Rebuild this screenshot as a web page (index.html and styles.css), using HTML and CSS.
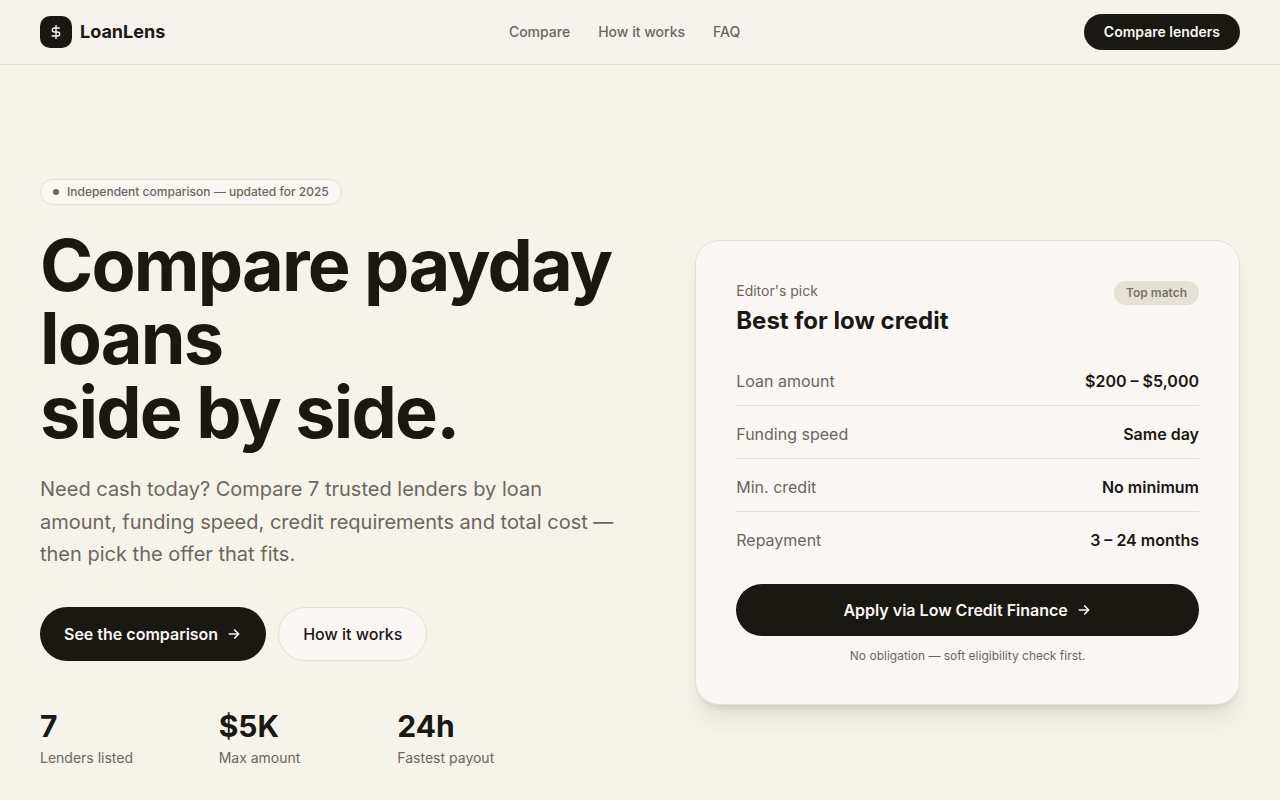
FILE: index.html
```html
<!DOCTYPE html>
<html lang="en">
<head>
<meta charset="utf-8">
<meta name="viewport" content="width=device-width, initial-scale=1">
<title>LoanLens</title>
<link rel="stylesheet" href="styles.css">
</head>
<body>
<header class="site-header">
  <div class="container header-row">
    <a class="brand" href="#">
      <span class="brand-mark">
        <svg class="icon" viewBox="0 0 24 24" aria-hidden="true"><path d="M12 2v20M17 6H9.500a3 3 0 0 0 0 6h5a3 3 0 0 1 0 6H6"/></svg>
      </span>
      LoanLens
    </a>
    <nav class="nav">
      <a href="#compare">Compare</a>
      <a href="#how">How it works</a>
      <a href="#faq">FAQ</a>
    </nav>
    <a class="btn btn-small" href="#compare">Compare lenders</a>
  </div>
</header>
<main class="container hero">
  <section class="intro">
    <p class="badge"><span class="dot"></span>Independent comparison — updated for 2025</p>
    <h1>Compare payday loans<br>side by side.</h1>
    <p class="lead">Need cash today? Compare 7 trusted lenders by loan amount, funding speed, credit requirements and total cost — then pick the offer that fits.</p>
    <div class="actions">
      <a class="btn btn-large" href="#compare">See the comparison
        <svg class="icon arrow" viewBox="0 0 24 24" aria-hidden="true"><path d="M5 12h14M13 6l6 6-6 6"/></svg>
      </a>
      <a class="btn btn-large btn-outline" href="#how">How it works</a>
    </div>
    <dl class="stats">
      <div><dt>Lenders listed</dt><dd>7</dd></div>
      <div><dt>Max amount</dt><dd>$5K</dd></div>
      <div><dt>Fastest payout</dt><dd>24h</dd></div>
    </dl>
  </section>
  <aside class="card">
    <div class="card-head">
      <div>
        <p class="eyebrow">Editor's pick</p>
        <h2>Best for low credit</h2>
      </div>
      <span class="tag">Top match</span>
    </div>
    <dl class="facts">
      <div><dt>Loan amount</dt><dd>$200 – $5,000</dd></div>
      <div><dt>Funding speed</dt><dd>Same day</dd></div>
      <div><dt>Min. credit</dt><dd>No minimum</dd></div>
      <div><dt>Repayment</dt><dd>3 – 24 months</dd></div>
    </dl>
    <a class="btn btn-apply" href="#apply">Apply via Low Credit Finance
      <svg class="icon arrow" viewBox="0 0 24 24" aria-hidden="true"><path d="M5 12h14M13 6l6 6-6 6"/></svg>
    </a>
    <p class="note">No obligation — soft eligibility check first.</p>
  </aside>
</main>
</body>
</html>
```
FILE: styles.css
```css
:root {
  --bg: #f6f3eb;
  --header: #f6f3ee;
  --surface: #faf6f3;
  --ink: #1a1813;
  --muted: #6b675e;
  --line: #e5e0d5;
}

* {
  box-sizing: border-box;
  margin: 0;
}

body {
  background: var(--bg);
  color: var(--ink);
  font: 16px/24px Inter, sans-serif;
}

a {
  color: inherit;
  text-decoration: none;
}

.container {
  max-width: 1280px;
  margin: 0 auto;
  padding: 0 40px;
}

.icon {
  width: 16px;
  height: 16px;
  flex: none;
  fill: none;
  stroke: currentColor;
  stroke-width: 2;
  stroke-linecap: round;
  stroke-linejoin: round;
}

.arrow {
  stroke-width: 2.5;
}

.site-header {
  border-bottom: 1px solid var(--line);
  background: var(--header);
}

.header-row {
  display: flex;
  align-items: center;
  justify-content: space-between;
  height: 64px;
}

.brand {
  display: flex;
  align-items: center;
  gap: 8px;
  font-size: 18px;
  line-height: 28px;
  font-weight: 700;
}

.brand-mark {
  display: grid;
  place-items: center;
  width: 32px;
  height: 32px;
  border-radius: 10px;
  background: var(--ink);
  color: var(--surface);
}

.nav {
  display: flex;
  gap: 28px;
  color: var(--muted);
  font-size: 14px;
  line-height: 20px;
  font-weight: 500;
}

.btn {
  display: inline-flex;
  align-items: center;
  justify-content: center;
  gap: 8px;
  border-radius: 999px;
  background: var(--ink);
  color: var(--surface);
  font-weight: 600;
}

.btn-small {
  height: 36px;
  padding: 0 20px;
  font-size: 14px;
  line-height: 20px;
}

.btn-large {
  height: 54px;
  padding: 0 24px;
}

.btn-outline {
  border: 1px solid var(--line);
  background: var(--surface);
  color: var(--ink);
  font-weight: 500;
}

.hero {
  display: grid;
  grid-template-columns: minmax(0, 11fr) minmax(0, 10fr);
  gap: 56px;
  align-items: center;
  padding-top: 112px;
  padding-bottom: 112px;
}

.badge {
  display: inline-flex;
  align-items: center;
  gap: 8px;
  padding: 4px 12px;
  border: 1px solid var(--line);
  border-radius: 999px;
  background: var(--surface);
  color: var(--muted);
  font-size: 12px;
  line-height: 16px;
  font-weight: 500;
}

.dot {
  width: 6px;
  height: 6px;
  border-radius: 50%;
  background: var(--muted);
}

h1 {
  margin-top: 23px;
  font-size: 72px;
  line-height: 1.02;
  font-weight: 700;
  letter-spacing: -0.025em;
}

.lead {
  max-width: 576px;
  margin-top: 25px;
  color: var(--muted);
  font-size: 20px;
  line-height: 1.625;
}

.actions {
  display: flex;
  gap: 12px;
  margin-top: 36px;
}

.stats {
  display: grid;
  grid-template-columns: repeat(3, 1fr);
  gap: 24px;
  max-width: 512px;
  margin-top: 47px;
}

.stats div {
  display: flex;
  flex-direction: column-reverse;
}

.stats dt {
  color: var(--muted);
  font-size: 14px;
  line-height: 20px;
}

.stats dd {
  margin-bottom: 4px;
  margin-left: 0;
  font-size: 30px;
  line-height: 36px;
  font-weight: 700;
}

.card {
  padding: 40px;
  border: 1px solid var(--line);
  border-radius: 24px;
  background: var(--surface);
  box-shadow: 0 20px 25px -5px #1a181314, 0 8px 10px -6px #1a181320;
}

.card-head {
  display: flex;
  align-items: flex-start;
  justify-content: space-between;
}

.eyebrow {
  color: var(--muted);
  font-size: 14px;
  line-height: 20px;
}

h2 {
  margin-top: 4px;
  font-size: 24px;
  line-height: 32px;
  font-weight: 700;
}

.tag {
  padding: 4px 12px;
  border-radius: 999px;
  background: #e6e1d5;
  color: #7a756b;
  font-size: 12px;
  line-height: 16px;
  font-weight: 600;
}

.facts {
  margin-top: 32px;
}

.facts div {
  display: flex;
  justify-content: space-between;
  padding-bottom: 12px;
  margin-bottom: 16px;
  border-bottom: 1px solid var(--line);
}

.facts div:last-child {
  border-bottom: 0;
  margin-bottom: 0;
}

.facts dt {
  color: var(--muted);
}

.facts dd {
  margin: 0;
  font-weight: 600;
}

.btn-apply {
  display: flex;
  height: 52px;
  margin-top: 20px;
}

.note {
  margin-top: 12px;
  color: var(--muted);
  font-size: 12px;
  line-height: 16px;
  text-align: center;
}
```
